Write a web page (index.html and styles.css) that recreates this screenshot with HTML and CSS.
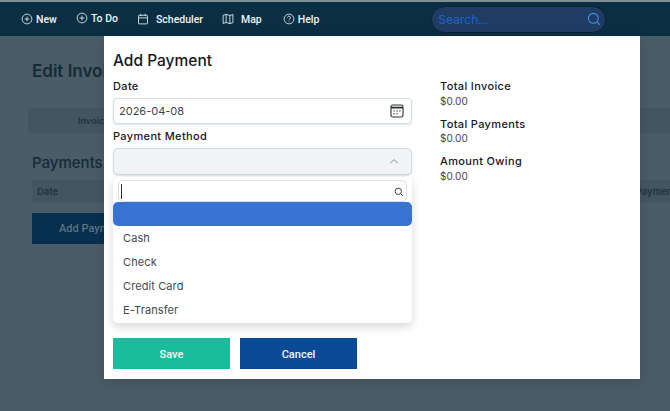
FILE: index.html
```html
<!DOCTYPE html>
<html lang="en">
<head>
<meta charset="utf-8">
<title>Add Payment</title>
<link rel="stylesheet" href="styles.css">
</head>
<body>
<header class="nav">
  <a class="nav-item n-new"><svg class="ic" viewBox="0 0 16 16"><circle cx="8" cy="8" r="6.5"/><path d="M8 4.8v6.4M4.8 8h6.4"/></svg>New</a>
  <a class="nav-item n-todo"><svg class="ic" viewBox="0 0 16 16"><circle cx="8" cy="8" r="6.5"/><path d="M8 4.8v6.4M4.8 8h6.4"/></svg>To Do</a>
  <a class="nav-item n-sched"><svg class="ic" viewBox="0 0 16 16"><rect x="2" y="3" width="12" height="11.5" rx="1.2"/><path d="M2 6.5h12M5 1.2v3M11 1.2v3"/></svg>Scheduler</a>
  <a class="nav-item n-map"><svg class="ic" viewBox="0 0 16 16"><path d="M1.5 3.2 5.5 1.8l5 1.6 4-1.4v10.8l-4 1.4-5-1.6-4 1.4zM5.5 1.8v10.8M10.5 3.4v10.8"/></svg>Map</a>
  <a class="nav-item n-help"><svg class="ic" viewBox="0 0 16 16"><circle cx="8" cy="8" r="6.5"/><path d="M6 6.2a2 2 0 1 1 3 1.8c-.7.4-1 .8-1 1.6M8 11.2v.8"/></svg>Help</a>
  <div class="search"><span class="search-text">Search...</span><svg class="search-ic" viewBox="0 0 16 16"><circle cx="7.2" cy="7.2" r="5.6"/><path d="m11.4 11.4 3.2 3.2"/></svg></div>
</header>

<main class="page">
  <h1 class="page-title">Edit Invoice</h1>
  <div class="tabs"><span class="tab-label">Invoice</span></div>
  <h2 class="section-title">Payments</h2>
  <div class="table-head"><span>Date</span><span class="th-right">Payment</span></div>
  <button class="add-btn">Add Payment</button>
</main>

<section class="modal">
  <h3 class="modal-title">Add Payment</h3>
  <div class="modal-body">
    <div class="form-col">
      <label class="label">Date</label>
      <div class="input">
        <span>2026-04-08</span>
        <svg class="cal" viewBox="0 0 14 14"><rect x="1" y="1" width="12" height="12" rx="1.8"/><path class="cal-band" d="M1 3.6h12"/><path class="dots" d="M3.4 7h1.4M6.3 7h1.4M9.2 7h1.4M3.4 9.8h1.4M6.3 9.8h1.4"/></svg>
      </div>
      <label class="label label-method">Payment Method</label>
      <div class="select-wrap">
        <div class="select"><svg class="chev" viewBox="0 0 12 8"><path d="m1.5 6 4.5-4.2L10.5 6"/></svg></div>
        <div class="dropdown">
          <div class="dd-search"><span class="caret"></span><svg class="dd-ic" viewBox="0 0 12 12"><circle cx="5.2" cy="5.2" r="3.8"/><path d="m8 8 2.8 2.8"/></svg></div>
          <div class="opt opt-active"></div>
          <div class="opt">Cash</div>
          <div class="opt">Check</div>
          <div class="opt">Credit Card</div>
          <div class="opt">E-Transfer</div>
        </div>
      </div>
    </div>
    <div class="totals">
      <div class="total"><div class="total-label">Total Invoice</div><div class="total-val">$0.00</div></div>
      <div class="total"><div class="total-label">Total Payments</div><div class="total-val">$0.00</div></div>
      <div class="total"><div class="total-label">Amount Owing</div><div class="total-val">$0.00</div></div>
    </div>
  </div>
  <div class="actions">
    <button class="btn btn-save">Save</button>
    <button class="btn btn-cancel">Cancel</button>
  </div>
</section>
</body>
</html>
```

FILE: styles.css
```css
* { box-sizing: border-box; }
html, body { margin: 0; height: 100%; }
body {
  width: 670px;
  height: 411px;
  overflow: hidden;
  background: #4a5c66;
  font-family: "Inter", "Liberation Sans", sans-serif;
  position: relative;
}
.nav {
  height: 36px;
  border-top: 2px solid #7f8f96;
  background: #0a2e42;
  display: flex;
  align-items: center;
  color: #f1f4f6;
  font-family: "Roboto", sans-serif;
  font-size: 10.5px;
  font-weight: 500;
}
.nav-item { display: flex; align-items: center; gap: 3px; }
.ic { width: 12px; height: 12px; fill: none; stroke: #f1f4f6; stroke-width: 1.1; }
.n-new { margin-left: 21px; }
.n-todo { margin-left: 19px; padding-bottom: 2px; }
.n-sched { margin-left: 19px; gap: 7px; }
.n-map { margin-left: 19px; gap: 7px; }
.n-help { margin-left: 21px; }
.search {
  margin-left: 112px;
  width: 175px;
  height: 27px;
  border-radius: 14px;
  background: #213c63;
  border: 1px solid #0c2233;
  display: flex;
  align-items: center;
  justify-content: space-between;
  padding: 0 4px 0 6px;
  color: #1566d8;
  font-family: "Inter", sans-serif;
  font-size: 12px;
  font-weight: 400;
}
.search-ic { width: 14px; height: 14px; fill: none; stroke: #3d97ea; stroke-width: 1.2; }

.page { padding: 0 0 0 32px; color: #0d2635; }
.page-title { margin: 24px 0 0; font-size: 17px; line-height: 22px; font-weight: 600; color: #142b38; }
.tabs {
  margin: 26px 0 0 -4px;
  width: 642px;
  height: 25px;
  background: #43555f;
  display: flex;
  align-items: center;
  padding-left: 50px;
  font-size: 9px;
  font-weight: 600;
  color: #1c3442;
}
.section-title { margin: 20px 0 0; font-size: 15px; line-height: 20px; font-weight: 500; color: #142b38; }
.table-head {
  margin-top: 7px;
  width: 644px;
  height: 23px;
  background: #43555f;
  display: flex;
  align-items: center;
  justify-content: space-between;
  padding: 0 0 0 5px;
  font-size: 9.5px;
  font-weight: 600;
  color: #1c3442;
}
.add-btn {
  display: block;
  margin-top: 10px;
  width: 120px;
  height: 31px;
  border: 0;
  background: #07304f;
  color: #5d7382;
  font-family: "Roboto", sans-serif;
  font-size: 11px;
  font-weight: 500;
}

.modal {
  position: absolute;
  left: 104px;
  top: 36px;
  width: 536px;
  height: 343px;
  background: #fff;
  padding: 15px 9px 10px;
  display: flex;
  flex-direction: column;
  box-shadow: 0 3px 10px rgba(0, 0, 0, .12);
}
.modal-title { margin: 0; font-size: 15.5px; line-height: 20px; font-weight: 500; color: #16181c; }
.modal-body { display: flex; margin-top: 8px; }
.form-col { width: 299px; }
.label { display: block; font-size: 11px; line-height: 15px; font-weight: 500; color: #16181c; letter-spacing: .35px; }
.label-method { margin-top: 5px; }
.input {
  margin-top: 4px;
  height: 26px;
  border: 1px solid #d3dde3;
  border-radius: 4px;
  display: flex;
  align-items: center;
  justify-content: space-between;
  padding: 0 7px 0 5px;
  font-size: 11px;
  color: #3f4449;
  box-shadow: 0 1px 2px rgba(70, 100, 120, .2);
}
.cal { width: 14px; height: 14px; fill: none; stroke: #2b3034; stroke-width: 1.1; }
.cal-band { stroke-width: 1.8; }
.select-wrap { position: relative; margin-top: 4px; }
.select {
  height: 27px;
  background: #f1f3f5;
  border: 1px solid #ccd9e1;
  border-radius: 5px;
  display: flex;
  align-items: center;
  justify-content: flex-end;
  padding-right: 12px;
  box-shadow: 0 1px 2px rgba(70, 100, 120, .2);
}
.chev { width: 10px; height: 7px; fill: none; stroke: #a4abb1; stroke-width: 1.3; }
.dropdown {
  position: absolute;
  left: 0;
  right: 0;
  top: 29px;
  height: 146px;
  background: #fff;
  border-radius: 5px;
  padding-top: 3px;
  box-shadow: 0 4px 10px rgba(0, 0, 0, .16);
}
.dd-search {
  margin: 0 5px;
  height: 22px;
  border: 1px solid #d8e0e5;
  border-radius: 5px;
  display: flex;
  align-items: center;
  justify-content: space-between;
  padding: 0 2px 0 2px;
}
.caret { width: 1px; height: 15px; background: #2b3034; }
.dd-ic { width: 10px; height: 10px; margin-top: 1px; fill: none; stroke: #2b3034; stroke-width: 1.1; }
.opt {
  height: 24px;
  display: flex;
  align-items: center;
  padding-left: 10px;
  font-size: 11px;
  letter-spacing: .1px;
  color: #45494e;
}
.opt-active { background: #3873d1; border-radius: 5px; }
.totals { margin-left: 28px; display: flex; flex-direction: column; gap: 8px; }
.total-label { font-size: 11px; line-height: 14.5px; font-weight: 500; color: #16181c; letter-spacing: .35px; }
.total-val { font-size: 10px; line-height: 15px; color: #3f4449; }
.actions { margin-top: auto; display: flex; gap: 10px; }
.btn {
  width: 117px;
  height: 31px;
  border: 0;
  padding-top: 2px;
  color: #f3f7f8;
  font-family: "Roboto", sans-serif;
  font-size: 11px;
  font-weight: 500;
}
.btn-save { background: #1abc9c; }
.btn-cancel { background: #084a96; }
```
